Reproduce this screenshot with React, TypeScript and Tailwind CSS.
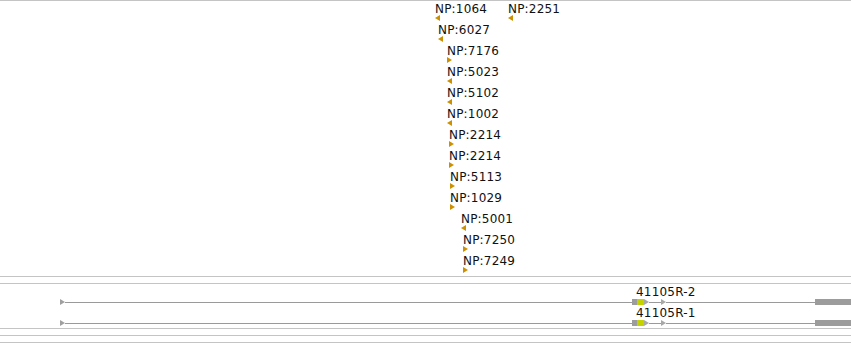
import React from "react";

type Feature = { name: string; x: number; dir: "l" | "r" };

// one entry per layout row of the track; x is the feature start
const rows: Feature[][] = [
    [
        { name: "NP:1064", x: 435, dir: "l" },
        { name: "NP:2251", x: 508, dir: "l" },
    ],
    [{ name: "NP:6027", x: 438, dir: "l" }],
    [{ name: "NP:7176", x: 447, dir: "r" }],
    [{ name: "NP:5023", x: 447, dir: "l" }],
    [{ name: "NP:5102", x: 447, dir: "l" }],
    [{ name: "NP:1002", x: 447, dir: "l" }],
    [{ name: "NP:2214", x: 449, dir: "r" }],
    [{ name: "NP:2214", x: 449, dir: "r" }],
    [{ name: "NP:5113", x: 450, dir: "r" }],
    [{ name: "NP:1029", x: 450, dir: "r" }],
    [{ name: "NP:5001", x: 461, dir: "l" }],
    [{ name: "NP:7250", x: 463, dir: "r" }],
    [{ name: "NP:7249", x: 463, dir: "r" }],
];

function Arrow({ dir, color }: { dir: "l" | "r"; color: string }) {
    return (
        <svg width="5" height="6" viewBox="0 0 5 6" className="block shrink-0">
            {dir === "l" ? (
                <polygon points="5,0 5,6 0,3" fill={color} />
            ) : (
                <polygon points="0,0 0,6 5,3" fill={color} />
            )}
        </svg>
    );
}

function Transcript({ label }: { label: string }) {
    return (
        <div className="flex flex-col h-[21px]">
            <div className="pl-[636px] pt-px h-[15px] text-[12px] leading-[14px] text-[#111] tracking-[0.2px]">{label}</div>
            <div className="flex items-center h-[6px] pl-[60px]">
                <Arrow dir="r" color="#a0a0a0" />
                <div className="w-[567px] h-px bg-[#9a9a9a]" />
                <div className="w-[5px] h-[6px] bg-[#9c9c9c]" />
                <div className="w-[7px] h-[6px] bg-[#c4d200]" />
                <Arrow dir="r" color="#a8a8a8" />
                <div className="w-[12px] h-px bg-[#9a9a9a]" />
                <Arrow dir="r" color="#a8a8a8" />
                <div className="flex-1 h-px bg-[#9a9a9a]" />
                <div className="w-[36px] h-[6px] bg-[#9c9c9c]" />
            </div>
        </div>
    );
}

export default function App() {
    return (
        <div className="w-[851px] h-[343px] bg-white overflow-hidden" style={{ fontFamily: '"DejaVu Sans", sans-serif' }}>
            <div className="h-px bg-[#c4c4c4]" />
            <div className="flex flex-col h-[275px] pt-px">
                {rows.map((row, i) => (
                    <div key={i} className="relative h-[21px] shrink-0">
                        {row.map((f, j) => (
                            <div key={j} className="absolute top-0 flex flex-col" style={{ left: f.x }}>
                                <span className="text-[12px] leading-[14px] text-[#111] tracking-[0.2px] whitespace-nowrap">{f.name}</span>
                                <div className="-mt-px">
                                    <Arrow dir={f.dir} color="#cc9000" />
                                </div>
                            </div>
                        ))}
                    </div>
                ))}
            </div>
            <div className="h-px bg-[#c4c4c4]" />
            <div className="h-[6px]" />
            <div className="h-px bg-[#c4c4c4]" />
            <div className="pb-[2px]">
                <Transcript label="41105R-2" />
                <Transcript label="41105R-1" />
            </div>
            <div className="h-px bg-[#c4c4c4]" />
            <div className="h-[6px]" />
            <div className="h-px bg-[#c4c4c4]" />
            <div className="h-[6px]" />
            <div className="h-px bg-[#c4c4c4]" />
        </div>
    );
}
